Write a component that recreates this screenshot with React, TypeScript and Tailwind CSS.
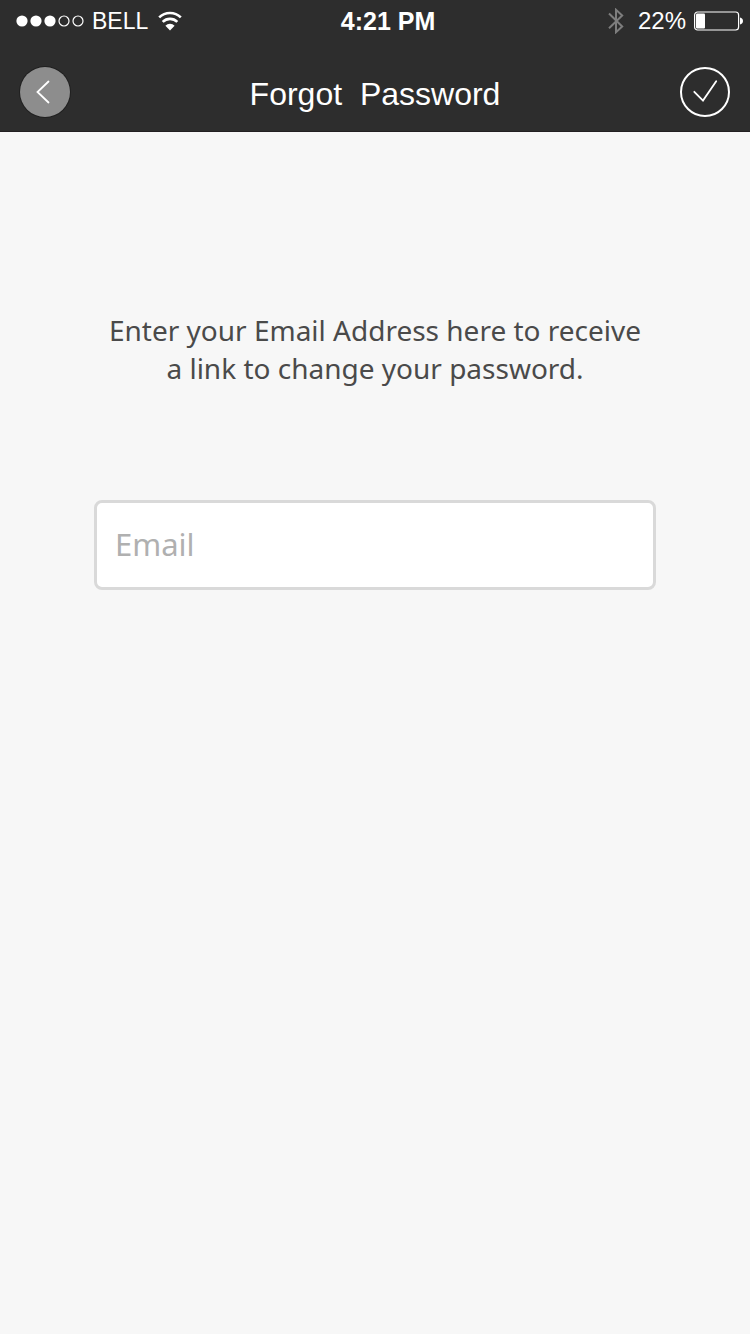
import React, { useState } from "react";

function SignalDots() {
  return (
    <svg width="68" height="14" viewBox="0 0 68 14" aria-hidden="true">
      <circle cx="6" cy="7" r="5.6" fill="#fff" />
      <circle cx="20" cy="7" r="5.6" fill="#fff" />
      <circle cx="34" cy="7" r="5.6" fill="#fff" />
      <circle cx="48" cy="7" r="5" fill="none" stroke="#fff" strokeWidth="1.2" />
      <circle cx="62" cy="7" r="5" fill="none" stroke="#fff" strokeWidth="1.2" />
    </svg>
  );
}

function WifiIcon() {
  return (
    <svg width="24" height="20" viewBox="0 0 24 20" fill="none" aria-hidden="true">
      <path d="M1.2 6.4a15.4 15.4 0 0 1 21.6 0" stroke="#fff" strokeWidth="2.6" />
      <path d="M4.7 10.9a10.4 10.4 0 0 1 14.6 0" stroke="#fff" strokeWidth="2.6" />
      <path d="M12 19.6 7.4 14.7a6.4 6.4 0 0 1 9.2 0Z" fill="#fff" />
    </svg>
  );
}

function BluetoothIcon() {
  return (
    <svg width="16" height="26" viewBox="0 0 16 26" fill="none" aria-hidden="true">
      <path d="M1 5.5 14.2 18.5 8 24.2V1.8L14.2 7.5 1 20.2" stroke="#7d7d7d" strokeWidth="2" />
    </svg>
  );
}

function BatteryIcon() {
  return (
    <svg width="50" height="20" viewBox="0 0 50 20" aria-hidden="true">
      <rect x="0.6" y="1" width="44" height="18" rx="3" fill="none" stroke="#fff" strokeWidth="1.2" />
      <rect x="2" y="2.5" width="9" height="15" rx="1" fill="#fff" />
      <path d="M46 6.5v7c1.9-.6 3-1.8 3-3.5S47.9 7.1 46 6.5Z" fill="#fff" />
    </svg>
  );
}

export default function App() {
  const [email, setEmail] = useState("");

  return (
    <div className="flex min-h-screen flex-col bg-[#f7f7f7] font-['Liberation_Sans',Arial,sans-serif]">
      <header className="border-b border-[#231f22] bg-[#2d2d2d] text-white">
        <div className="grid h-[41px] grid-cols-[1fr_auto_1fr] items-center pr-[6px] pl-4 text-2xl leading-10">
          <div className="flex items-center gap-2">
            <SignalDots />
            <span className="pr-[2px] text-[23px]">BELL</span>
            <WifiIcon />
          </div>
          <time className="pl-4 text-[25px] font-bold">4:21 PM</time>
          <div className="flex items-center justify-end gap-2">
            <BluetoothIcon />
            <span className="pl-[6px]">22%</span>
            <BatteryIcon />
          </div>
        </div>
        <div className="flex h-[90px] items-center justify-between px-5 pt-3">
          <button
            type="button"
            aria-label="Back"
            className="flex size-[50px] items-center justify-center rounded-full bg-[#8d8d8d] ring-1 ring-[#202020]"
          >
            <svg width="50" height="50" viewBox="0 0 50 50" fill="none" aria-hidden="true">
              <path d="M28.5 14.5 17.5 25 28.5 35.5" stroke="#fff" strokeWidth="1.8" strokeLinecap="round" />
            </svg>
          </button>
          <h1 className="pt-1 text-[32px] leading-10">Forgot&nbsp; Password</h1>
          <button
            type="submit"
            form="forgot-password"
            aria-label="Submit"
            className="flex size-[50px] items-center justify-center rounded-full border-2 border-white"
          >
            <svg width="46" height="46" viewBox="0 0 46 46" fill="none" className="shrink-0" aria-hidden="true">
              <path d="M12.3 22.8 21 31.6 34.2 12.3" stroke="#fff" strokeWidth="1.8" strokeLinecap="round" />
            </svg>
          </button>
        </div>
      </header>
      <main className="flex-1 px-[94px] pt-[179px] font-['Noto_Sans',sans-serif]">
        <form id="forgot-password" onSubmit={(e) => e.preventDefault()}>
          <label htmlFor="email" className="block text-center text-[28px] leading-[38px] text-[#4a4a4a]">
            Enter your Email Address here to receive
            <br />a link to change your password.
          </label>
          <input
            id="email"
            type="email"
            placeholder="Email"
            value={email}
            onChange={(e) => setEmail(e.target.value)}
            className="mt-[113px] block h-[90px] w-full rounded-lg border-3 border-[#d9d9d9] bg-white px-[18px] pb-[2px] text-[31px] text-[#4a4a4a] outline-none placeholder:text-[#b0b0b0]"
          />
        </form>
      </main>
    </div>
  );
}
